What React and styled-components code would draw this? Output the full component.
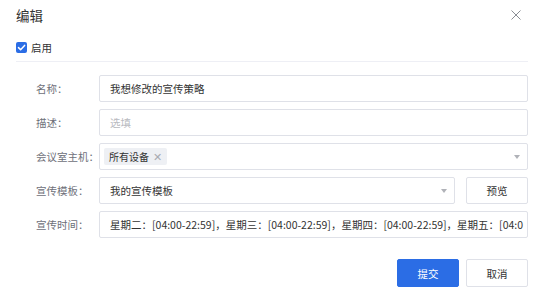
import React from 'react';
import styled, { createGlobalStyle } from 'styled-components';

const GlobalStyle = createGlobalStyle`
  html, body {
    margin: 0;
    padding: 0;
    background: #fff;
  }
  body {
    font-family: "Noto Sans CJK SC", "Noto Sans", sans-serif;
    color: #333;
  }
`;

const Dialog = styled.div`
  width: 544px;
  height: 298px;
  background: #fff;
  box-sizing: border-box;
  padding: 0 16px;
  display: flex;
  flex-direction: column;
`;

const Header = styled.div`
  height: 30px;
  display: flex;
  align-items: center;
  justify-content: space-between;
`;

const Title = styled.div`
  font-size: 13.5px;
  line-height: 18px;
  color: #333;
`;

const Close = styled.button`
  border: 0;
  background: none;
  padding: 0;
  margin-right: 6px;
  width: 12px;
  height: 12px;
  display: flex;
  cursor: pointer;
`;

const EnableRow = styled.label`
  display: flex;
  align-items: center;
  gap: 4px;
  padding: 7px 0 4px;
  height: 20px;
  border-bottom: 1px solid #eeeff5;
  font-size: 10.5px;
  color: #333;
`;

const Check = styled.span`
  width: 11px;
  height: 11px;
  border-radius: 2px;
  background: #2b6de5;
  display: flex;
  align-items: center;
  justify-content: center;
`;

const Form = styled.div`
  padding-top: 13px;
  display: flex;
  flex-direction: column;
  gap: 7px;
`;

const Row = styled.div`
  display: flex;
  align-items: center;
  height: 27px;
`;

const Label = styled.div`
  width: 83px;
  padding-left: 20px;
  box-sizing: border-box;
  font-size: 10.5px;
  color: #6e7079;
  flex-shrink: 0;
`;

const Field = styled.div`
  flex: 1;
  min-width: 0;
  height: 27px;
  box-sizing: border-box;
  border: 1px solid #dfe1e8;
  border-radius: 2px;
  display: flex;
  align-items: center;
  padding: 0 ${p => (p.tight ? '4px' : '10px')};
  font-size: 10.5px;
  color: ${p => (p.placeholder ? '#b8bac0' : '#333')};
  white-space: nowrap;
  overflow: hidden;
`;

const FieldText = styled.span`
  flex: 1;
  overflow: hidden;
`;

const Arrow = styled.span`
  width: 0;
  height: 0;
  border-left: 3px solid transparent;
  border-right: 3px solid transparent;
  border-top: 4px solid #b0b2b8;
  margin-left: auto;
  margin-right: ${p => (p.tight ? '3px' : '-3px')};
`;

const Tag = styled.span`
  display: inline-flex;
  align-items: center;
  gap: 4px;
  height: 17px;
  padding: 0 5px;
  background: #eef0f4;
  border-radius: 2px;
  font-size: 10px;
  color: #333;
`;

const TagClose = styled.span`
  color: #a8abb2;
  font-size: 11px;
  line-height: 1;
`;

const Button = styled.button`
  flex-shrink: 0;
  width: 62px;
  height: ${p => p.h || 28}px;
  box-sizing: border-box;
  border-radius: 2px;
  border: 1px solid ${p => (p.primary ? '#2b6de5' : '#dfe1e8')};
  background: ${p => (p.primary ? '#2b6de5' : '#fff')};
  color: ${p => (p.primary ? '#fff' : '#333')};
  font-family: inherit;
  font-size: 10.5px;
  padding: 0;
  margin-left: ${p => p.ml || 0}px;
  cursor: pointer;
`;

const Footer = styled.div`
  margin-top: 21px;
  display: flex;
  justify-content: flex-end;
  gap: 7px;
`;

export default function App() {
  return (
    <>
      <GlobalStyle />
      <Dialog>
        <Header>
          <Title>编辑</Title>
          <Close aria-label="close">
            <svg width="12" height="12" viewBox="0 0 12 12">
              <path d="M1.5 1.5L10.5 10.5M10.5 1.5L1.5 10.5" stroke="#8a8d94" strokeWidth="1" fill="none" />
            </svg>
          </Close>
        </Header>
        <EnableRow>
          <Check>
            <svg width="9" height="9" viewBox="0 0 9 9">
              <path d="M1.5 4.6L3.6 6.7L7.6 2.4" stroke="#fff" strokeWidth="1.5" fill="none" strokeLinecap="round" strokeLinejoin="round" />
            </svg>
          </Check>
          启用
        </EnableRow>
        <Form>
          <Row>
            <Label>名称：</Label>
            <Field>我想修改的宣传策略</Field>
          </Row>
          <Row>
            <Label>描述：</Label>
            <Field placeholder="1">选填</Field>
          </Row>
          <Row>
            <Label>会议室主机：</Label>
            <Field tight>
              <Tag>
                所有设备<TagClose>✕</TagClose>
              </Tag>
              <Arrow tight />
            </Field>
          </Row>
          <Row>
            <Label>宣传模板：</Label>
            <Field>
              <FieldText>我的宣传模板</FieldText>
              <Arrow />
            </Field>
            <Button h={27} ml={11}>预览</Button>
          </Row>
          <Row>
            <Label>宣传时间：</Label>
            <Field>
              星期二：[04:00-22:59]，星期三：[04:00-22:59]，星期四：[04:00-22:59]，星期五：[04:0
            </Field>
          </Row>
        </Form>
        <Footer>
          <Button primary>提交</Button>
          <Button>取消</Button>
        </Footer>
      </Dialog>
    </>
  );
}
